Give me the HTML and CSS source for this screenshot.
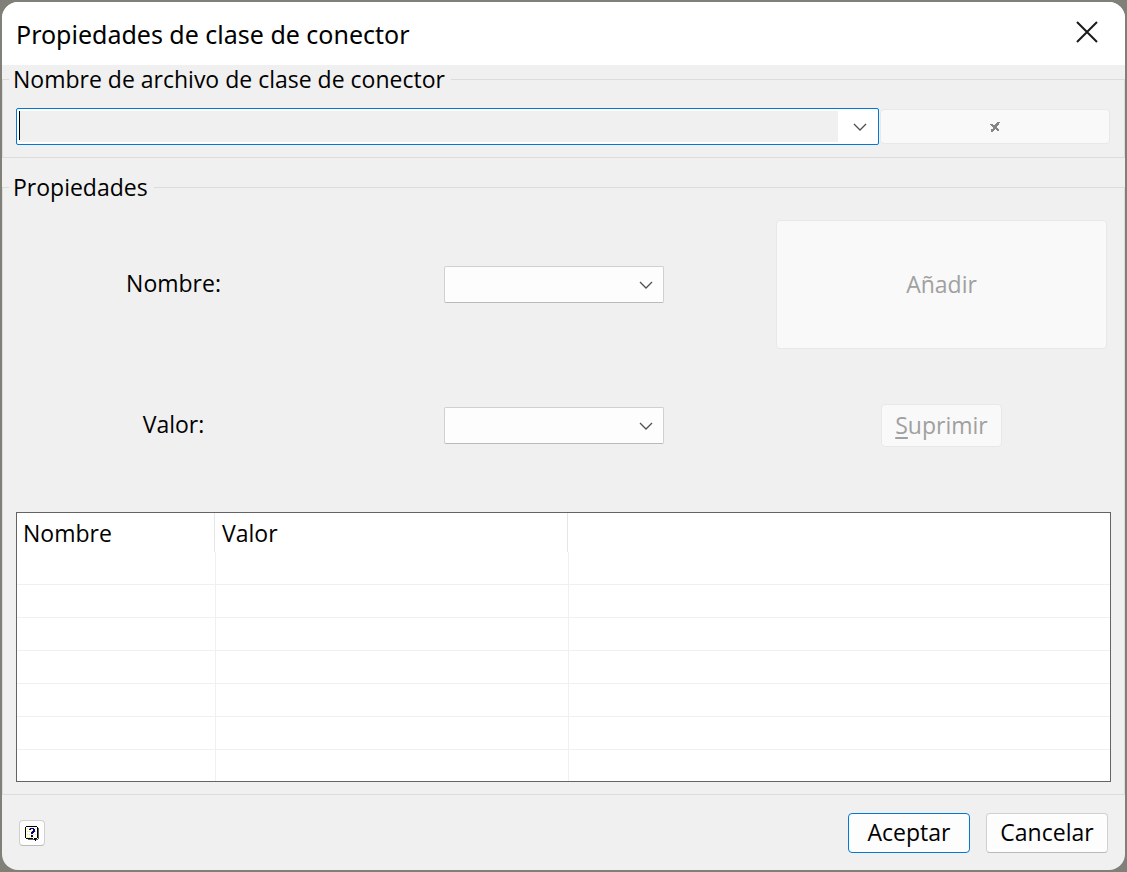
FILE: index.html
```html
<!DOCTYPE html>
<html lang="es">
<head>
    <meta charset="UTF-8">
    <meta name="viewport" content="width=device-width, initial-scale=1.0">
    <title>Propiedades de clase de conector</title>
    <link rel="stylesheet" href="styles.css">
</head>
<body>
    <form class="dialog">
        <header class="title-bar">
            <h1>Propiedades de clase de conector</h1>
            <button type="button" class="btn-close" aria-label="Cerrar">
                <svg width="22" height="22" viewBox="0 0 22 22"><path d="M1 1L21 21M21 1L1 21" fill="none" stroke="#1a1a1a" stroke-width="2"/></svg>
            </button>
        </header>

        <fieldset>
            <legend>Nombre de archivo de clase de conector</legend>
            <div class="file-row">
                <div class="combo">
                    <input type="text" class="combo-input" aria-label="Nombre de archivo de clase de conector">
                    <button type="button" class="combo-arrow" aria-label="Abrir lista">
                        <svg width="14" height="8" viewBox="0 0 14 8"><path d="M1 1L7 7L13 1" fill="none" stroke="#505050" stroke-width="1.3"/></svg>
                    </button>
                </div>
                <button type="button" class="btn btn-delete" aria-label="Borrar" disabled>
                    <svg width="10" height="10" viewBox="0 0 10 10" shape-rendering="crispEdges">
                        <path fill="#858585" d="M7 0h3v1h-3zM6 1h3v1h-3zM0 2h3v1h-3zM5 2h4v1h-4zM1 3h7v1h-7zM2 4h5v1h-5zM3 5h4v1h-4zM3 6h5v1h-5zM1 7h4v1h-4zM6 7h3v1h-3zM1 8h3v1h-3zM7 8h2v1h-2zM1 9h2v1h-2z"/>
                    </svg>
                </button>
            </div>
        </fieldset>

        <fieldset>
            <legend>Propiedades</legend>
            <div class="props">
                <label for="nombre">Nombre:</label>
                <select id="nombre"></select>
                <button type="button" class="btn btn-add" disabled>Añadir</button>

                <label for="valor">Valor:</label>
                <select id="valor"></select>
                <button type="button" class="btn btn-remove" disabled><u>S</u>uprimir</button>
            </div>

            <table class="list">
                <colgroup>
                    <col class="col-name">
                    <col class="col-value">
                    <col>
                </colgroup>
                <thead>
                    <tr><th>Nombre</th><th>Valor</th><th></th></tr>
                </thead>
                <tbody>
                    <tr><td></td><td></td><td></td></tr>
                    <tr><td></td><td></td><td></td></tr>
                    <tr><td></td><td></td><td></td></tr>
                    <tr><td></td><td></td><td></td></tr>
                    <tr><td></td><td></td><td></td></tr>
                    <tr><td></td><td></td><td></td></tr>
                    <tr><td></td><td></td><td></td></tr>
                </tbody>
            </table>
        </fieldset>

        <footer class="actions">
            <button type="button" class="btn btn-help" aria-label="Ayuda">
                <svg width="14" height="15" viewBox="0 0 14 15" shape-rendering="crispEdges">
                    <path fill="#606060" d="M13 2h1v11h-1zM3 13h6v1h-6zM11 13h2v1h-2z"/>
                    <path fill="#000" d="M1 0h11v1h1v11h-1v1h-1v2h-1v-1h-1v-1h-8v-1h-1v-11h1z"/>
                    <path fill="#fff" d="M1 1h11v11h-3v1h-1v-1h-7z"/>
                    <path fill="none" stroke="#f0ea50" stroke-dasharray="1 1" d="M2 2.500h10M2 5.500h10M2 8.500h10M2 11.500h7"/>
                    <path fill="#000080" d="M5 2h4v1h1v3h-1v1h-1v1h-2v-2h1v-1h1v-2h-2v1h-2v-1h1zM6 9h2v2h-2z"/>
                </svg>
            </button>
            <button type="submit" class="btn btn-main btn-default">Aceptar</button>
            <button type="button" class="btn btn-main">Cancelar</button>
        </footer>
    </form>
</body>
</html>
```
FILE: styles.css
```css
:root {
    --desktop: #808078;
    --face: #f0f0f0;
    --field: #fdfdfd;
    --line: #dcdcdc;
    --border: #d0d0d0;
    --accent: #0078d4;
    --disabled: #a0a0a0;
}

* {
    margin: 0;
    padding: 0;
    box-sizing: border-box;
}

body {
    background-color: var(--desktop);
    min-height: 100vh;
    padding: 2px;
    font-family: "Open Sans", sans-serif;
    font-size: 23px;
    line-height: 28px;
    color: #000;
}

button,
input,
select {
    font: inherit;
    color: inherit;
}

svg {
    display: block;
}

.dialog {
    background-color: var(--face);
    border-radius: 16px;
    overflow: hidden;
}

/* Title bar */
.title-bar {
    display: flex;
    align-items: center;
    justify-content: space-between;
    height: 63px;
    padding: 0 27px 0 14px;
    background-color: #fff;
}

.title-bar h1 {
    font-family: "Noto Sans", sans-serif;
    font-size: 25px;
    font-weight: 400;
}

.btn-close {
    margin-bottom: 4px;
    background: none;
    border: none;
}

/* Groups */
fieldset {
    min-width: 0;
    padding: 0 13px 12px;
    border: 1px solid var(--line);
}

fieldset + fieldset {
    margin-top: 15px;
}

legend {
    margin-left: -7px;
    padding: 0 6px 0 4px;
}

.file-row {
    display: flex;
    align-items: center;
    gap: 1px;
    margin-top: 15px;
    padding-right: 1px;
}

.combo {
    display: flex;
    flex: 1;
    height: 37px;
    padding: 2px;
    background-color: #fff;
    border: 1px solid var(--accent);
    border-radius: 2px;
}

.combo-input {
    flex: 1;
    min-width: 0;
    border: none;
    outline: none;
    background: linear-gradient(#000, #000) 0 0 / 1px 29px no-repeat var(--face);
}

.combo-arrow {
    display: flex;
    align-items: center;
    justify-content: center;
    width: 38px;
    padding-left: 6px;
    background: none;
    border: none;
}

.btn {
    display: flex;
    align-items: center;
    justify-content: center;
    background-color: var(--field);
    border: 1px solid var(--border);
    border-bottom-color: #bababa;
    border-radius: 4px;
}

.btn:disabled {
    color: var(--disabled);
    background-color: #f9f9f9;
    border-color: #e8e8e8;
}

.btn-delete {
    width: 230px;
    height: 35px;
}

/* Name and value */
.props {
    display: grid;
    grid-template-columns: 315fr 445fr 331fr;
    row-gap: 55px;
    align-items: center;
    justify-items: center;
    margin-top: 19px;
    padding-right: 4px;
}

.props label {
    padding-bottom: 4px;
}

select {
    width: 220px;
    height: 37px;
    appearance: none;
    background: var(--field) url("data:image/svg+xml,%3Csvg xmlns='http://www.w3.org/2000/svg' width='14' height='8'%3E%3Cpath d='M1 1L7 7L13 1' fill='none' stroke='%23505050' stroke-width='1.3'/%3E%3C/svg%3E") no-repeat right 10px center;
    border: 1px solid var(--border);
    border-bottom-color: #bababa;
    border-radius: 2px;
}

.btn-add,
.btn-remove,
.btn-main {
    padding-bottom: 2px;
}

.btn-add {
    width: 100%;
    height: 129px;
}

.btn-remove {
    width: 121px;
    height: 43px;
}

.btn-remove u {
    text-underline-offset: 3px;
}

/* List */
.list {
    width: 100%;
    margin-top: 65px;
    table-layout: fixed;
    border-spacing: 0;
    background-color: #fff;
    border: 1px solid #646464;
}

.col-name {
    width: 199px;
}

.col-value {
    width: 353px;
}

.list th {
    height: 39px;
    padding: 0 6px;
    font-weight: 400;
    text-align: left;
    border-right: 1px solid #fff;
    box-shadow: inset -1px 0 #e5e5e5;
}

.list td {
    height: 33px;
    border-right: 1px solid #f0f0f0;
    border-bottom: 1px solid #f0f0f0;
}

.list th:last-child,
.list td:last-child {
    border-right: none;
    box-shadow: none;
}

.list tbody tr:last-child td {
    height: 31px;
    border-bottom: none;
}

/* Bottom buttons */
.actions {
    display: flex;
    align-items: center;
    gap: 16px;
    padding: 18px 17px 17px;
}

.btn-help {
    width: 26px;
    height: 26px;
    margin-right: auto;
}

.btn-main {
    width: 122px;
    height: 40px;
}

.btn-default {
    border-color: var(--accent);
}
```
